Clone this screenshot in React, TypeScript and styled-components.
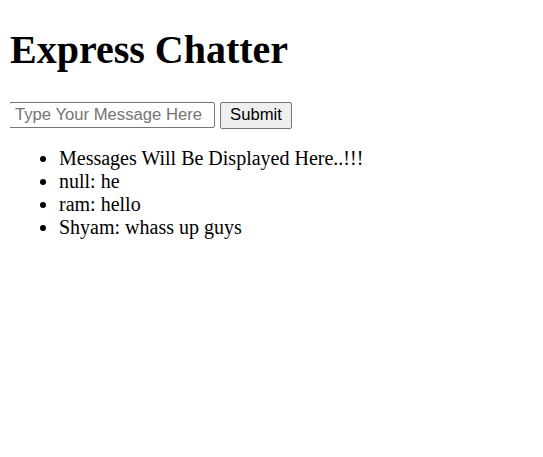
import React from "react";
import styled, { createGlobalStyle } from "styled-components";

const Global = createGlobalStyle`
  body {
    margin: 9px 10px;
    font-family: "Liberation Serif", "Times New Roman", serif;
    font-size: 20px;
    color: #000;
    background: #fff;
  }
`;

const Title = styled.h1`
  font-size: 40px;
  line-height: 46px;
  font-weight: bold;
  margin: 18px 0 27px 0;
`;

const Form = styled.form`
  display: flex;
  align-items: center;
  gap: 5px;
  height: 30px;
  margin-left: -1px;
`;

const Input = styled.input`
  font-family: "Liberation Sans", Arial, sans-serif;
  font-size: 16.67px;
  width: 206px;
  height: 26px;
  box-sizing: border-box;
  border: 1px solid #767676;
  border-radius: 2px;
  padding: 1px 5px;
  margin: 0;
  &::placeholder {
    color: #757575;
  }
`;

const Button = styled.button`
  font-family: "Liberation Sans", Arial, sans-serif;
  font-size: 16.67px;
  width: 72px;
  height: 27px;
  box-sizing: border-box;
  padding: 0;
  margin: 0;
  border: 1px solid #767676;
  border-radius: 2px;
  background: #efefef;
  color: #000;
`;

const List = styled.ul`
  margin: 17px 0;
  padding-left: 49px;
  font-size: 20px;
`;

const Item = styled.li`
  line-height: 23px;
`;

const messages = [
  "Messages Will Be Displayed Here..!!!",
  "null: he",
  "ram: hello",
  "Shyam: whass up guys",
];

export default function App() {
  return (
    <>
      <Global />
      <Title>Express Chatter</Title>
      <Form onSubmit={(e) => e.preventDefault()}>
        <Input placeholder="Type Your Message Here" />
        <Button type="submit">Submit</Button>
      </Form>
      <List>
        {messages.map((m) => (
          <Item key={m}>{m}</Item>
        ))}
      </List>
    </>
  );
}
